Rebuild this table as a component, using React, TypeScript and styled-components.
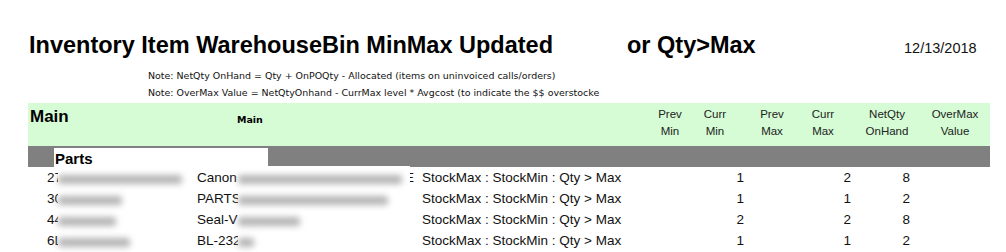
import React from "react";
import styled, { createGlobalStyle } from "styled-components";

const Global = createGlobalStyle`
  html, body { margin: 0; padding: 0; background: #fff; }
  body { font-family: "Liberation Sans", Arial, sans-serif; color: #000; }
`;

const Page = styled.div`
  width: 1006px;
  height: 252px;
  overflow: hidden;
  box-sizing: border-box;
  padding: 0 16px 0 28px;
`;

const TitleRow = styled.div`
  display: grid;
  grid-template-columns: 598px 278px auto;
  align-items: center;
  height: 30px;
  margin-top: 30px;
`;

const Title = styled.div`
  font-size: 23.5px;
  font-weight: bold;
  padding-left: 1px;
  white-space: nowrap;
`;

const DateText = styled.div`
  font-size: 14.5px;
  padding-top: 6px;
  color: #111;
`;

const Notes = styled.div`
  padding-left: 120px;
  margin-top: 7px;
`;

const NoteLine = styled.div`
  font-family: "DejaVu Sans", Verdana, sans-serif;
  font-size: 9.45px;
  line-height: 17px;
  height: 17px;
  white-space: nowrap;
  color: #111;
`;

const Table = styled.div`
  margin-top: 2px;
  width: 962px;
`;

const HeaderBand = styled.div`
  display: flex;
  align-items: flex-start;
  height: 43px;
  background: #d5fcd4;
`;

const MainTitle = styled.div`
  width: 207px;
  padding: 4px 0 0 2px;
  font-size: 17px;
  font-weight: bold;
  line-height: 20px;
`;

const MainSub = styled.div`
  width: 408px;
  padding-top: 10px;
  font-family: "DejaVu Sans", Verdana, sans-serif;
  font-size: 9.5px;
  font-weight: bold;
  line-height: 14px;
`;

const ColHead = styled.div<{ $w: number }>`
  width: ${(p) => p.$w}px;
  display: flex;
  flex-direction: column;
  align-items: center;
  padding-top: 3px;
  font-size: 11.5px;
  line-height: 17px;
  color: #222;
  white-space: nowrap;
`;

const GroupBand = styled.div`
  height: 21px;
  background: #808080;
  padding-left: 26px;
  display: flex;
  align-items: flex-end;
`;

const GroupLabel = styled.div`
  width: 214px;
  height: 19px;
  background: #fff;
  box-sizing: border-box;
  padding-left: 1px;
  font-size: 15px;
  font-weight: bold;
  line-height: 21px;
`;

const Rows = styled.div`
  position: relative;
`;

const Row = styled.div`
  display: grid;
  grid-template-columns: 150px 225px 282px 40px 107px 59px;
  height: 21px;
  align-items: center;
  padding-left: 19px;
  font-size: 13.5px;
  white-space: nowrap;
  color: #111;
`;

const Cell = styled.div<{ $right?: boolean }>`
  text-align: ${(p) => (p.$right ? "right" : "left")};
`;

const DescCell = styled.div`
  display: flex;
  justify-content: space-between;
  padding-right: 8px;
`;

const Redact = styled.div<{ $x: number; $y: number; $w: number }>`
  position: absolute;
  left: ${(p) => p.$x}px;
  top: ${(p) => p.$y}px;
  width: ${(p) => p.$w}px;
  bottom: 0;
  background: #fff;
  margin-top: -1px;
  padding-top: ${(p) => 3 - p.$y}px;
`;

const Smudge = styled.div<{ $w: number }>`
  height: 21px;
  display: flex;
  align-items: center;
  & > span {
    display: block;
    width: ${(p) => p.$w}px;
    height: 9px;
    background: #b4b4b4;
    filter: blur(3px);
    border-radius: 3px;
  }
`;

const rows = [
  { id: "27", desc: "Canon", tail: "E", cmin: "1", cmax: "2", net: "8" },
  { id: "30", desc: "PARTS", tail: "", cmin: "1", cmax: "1", net: "2" },
  { id: "44", desc: "Seal-V", tail: "", cmin: "2", cmax: "2", net: "8" },
  { id: "6L", desc: "BL-232", tail: "", cmin: "1", cmax: "1", net: "2" },
];

const smudge1 = [124, 64, 58, 72];
const smudge2 = [164, 150, 62, 16];

export default function App() {
  return (
    <>
      <Global />
      <Page>
        <TitleRow>
          <Title>Inventory Item WarehouseBin MinMax Updated</Title>
          <Title>or Qty&gt;Max</Title>
          <DateText>12/13/2018</DateText>
        </TitleRow>
        <Notes>
          <NoteLine>Note: NetQty OnHand = Qty + OnPOQty - Allocated (items on uninvoiced calls/orders)</NoteLine>
          <NoteLine>Note: OverMax Value = NetQtyOnhand - CurrMax level * Avgcost (to indicate the $$ overstocke</NoteLine>
        </Notes>
        <Table>
          <HeaderBand>
            <MainTitle>Main</MainTitle>
            <MainSub>Main</MainSub>
            <ColHead $w={50}><span>Prev</span><span>Min</span></ColHead>
            <ColHead $w={40}><span>Curr</span><span>Min</span></ColHead>
            <ColHead $w={74}><span>Prev</span><span>Max</span></ColHead>
            <ColHead $w={28}><span>Curr</span><span>Max</span></ColHead>
            <ColHead $w={100}><span>NetQty</span><span>OnHand</span></ColHead>
            <ColHead $w={36}><span>OverMax</span><span>Value</span></ColHead>
          </HeaderBand>
          <GroupBand>
            <GroupLabel>Parts</GroupLabel>
          </GroupBand>
          <Rows>
            {rows.map((r) => (
              <Row key={r.id}>
                <Cell>{r.id}</Cell>
                <DescCell>
                  <span>{r.desc}</span>
                  <span>{r.tail}</span>
                </DescCell>
                <Cell>StockMax : StockMin : Qty &gt; Max</Cell>
                <Cell $right>{r.cmin}</Cell>
                <Cell $right>{r.cmax}</Cell>
                <Cell $right>{r.net}</Cell>
              </Row>
            ))}
            <Redact $x={30} $y={3} $w={134}>
              {smudge1.map((w, i) => (
                <Smudge key={i} $w={w}><span /></Smudge>
              ))}
            </Redact>
            <Redact $x={210} $y={0} $w={172}>
              {smudge2.map((w, i) => (
                <Smudge key={i} $w={w}><span /></Smudge>
              ))}
            </Redact>
          </Rows>
        </Table>
      </Page>
    </>
  );
}
